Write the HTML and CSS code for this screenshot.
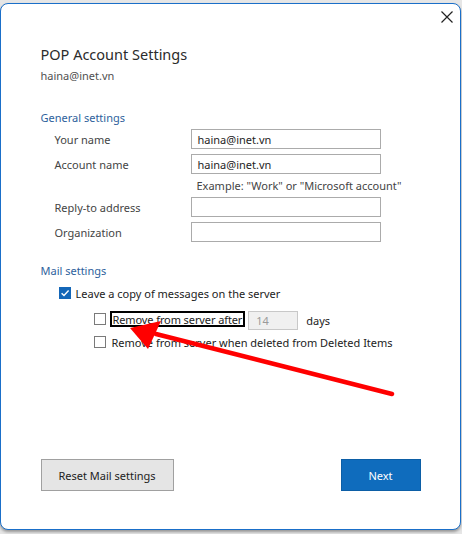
FILE: index.html
```html
<!DOCTYPE html>
<html>
<head>
<meta charset="utf-8">
<link rel="stylesheet" href="styles.css">
</head>
<body>
<div class="window">
  <div class="titlebar">
    <svg class="close" width="12" height="12" viewBox="0 0 12 12"><path d="M0.5 0.5 L11.5 11.5 M11.5 0.5 L0.5 11.5" stroke="#222" stroke-width="1.2" fill="none"/></svg>
  </div>
  <div class="content">
    <h1 class="title">POP Account Settings</h1>
    <div class="subtitle">haina@inet.vn</div>

    <div class="section-head general">General settings</div>
    <div class="form">
      <div class="label">Your name</div>
      <div class="input">haina@inet.vn</div>
      <div class="label">Account name</div>
      <div class="input">haina@inet.vn</div>
      <div></div>
      <div class="hint">Example: "Work" or "Microsoft account"</div>
      <div class="label">Reply-to address</div>
      <div class="input"></div>
      <div class="label">Organization</div>
      <div class="input"></div>
    </div>

    <div class="section-head mail">Mail settings</div>
    <div class="check-row row1">
      <span class="box checked"><svg width="12" height="12" viewBox="0 0 12 12"><path d="M2.6 6.2 L5 8.5 L9.6 3.6" stroke="#fff" stroke-width="1.4" fill="none"/></svg></span>
      <span class="ctext">Leave a copy of messages on the server</span>
    </div>
    <div class="check-row sub row2">
      <span class="box"></span>
      <span class="ctext focus">Remove from server after</span>
      <span class="days-input">14</span>
      <span class="days">days</span>
    </div>
    <div class="check-row sub row3">
      <span class="box"></span>
      <span class="ctext">Remove from server when deleted from Deleted Items</span>
    </div>

    <div class="buttons">
      <div class="btn reset">Reset Mail settings</div>
      <div class="btn next">Next</div>
    </div>
  </div>
  <svg class="arrow" width="462" height="534" viewBox="0 0 462 534">
    <line x1="156" y1="334" x2="392" y2="394" stroke="#ff0000" stroke-width="4.5" stroke-linecap="round"/>
    <polygon points="130,328 161,321 148,349" fill="#ff0000"/>
  </svg>
</div>
</body>
</html>
```
FILE: styles.css
```css
* { box-sizing: border-box; }
html, body { margin: 0; padding: 0; }
body {
  width: 462px;
  height: 534px;
  background: #e6e6e6;
  font-family: "Noto Sans", "Open Sans", sans-serif;
  font-size: 11px;
  color: #333;
  overflow: hidden;
}
.window {
  position: relative;
  margin-top: 3px;
  width: 461px;
  height: 527px;
  background: #fff;
  border: 1.5px solid #1a6fc9;
  border-radius: 8px;
  box-shadow: 0 2px 3px rgba(0,0,0,0.35);
}
.titlebar {
  height: 36px;
  display: flex;
  justify-content: flex-end;
  align-items: flex-start;
  padding-top: 6.5px;
  padding-right: 7.5px;
}
.close { display: block; }
.content {
  padding: 0 39.5px 0 39.5px;
}
.title {
  margin: 4px 0 0 0;
  font-size: 14.5px;
  font-weight: normal;
  line-height: 20px;
  color: #2b2b2b;
}
.subtitle {
  margin-top: 4px;
  line-height: 16px;
  color: #505050;
}
.section-head {
  line-height: 16px;
  color: #2e5f9c;
}
.general { margin-top: 26px; }
.mail { margin-top: 21px; }
.form {
  margin-top: 3px;
  display: grid;
  grid-template-columns: 150px 190px;
  grid-template-rows: 20px 25px 23px 20px 25px;
}
.form > :nth-child(3), .form > :nth-child(4) { margin-top: 5px; }
.form > :nth-child(9), .form > :nth-child(10) { margin-top: 5px; }
.label {
  padding-left: 14px;
  display: flex;
  align-items: center;
  color: #444;
}
.input {
  border: 1px solid #ababab;
  background: #fff;
  height: 20px;
  padding-left: 6px;
  display: flex;
  align-items: center;
  color: #1e1e1e;
}
.hint {
  display: flex;
  align-items: center;
  padding-left: 6px;
  color: #444;
  white-space: nowrap;
}
.check-row {
  display: flex;
  align-items: center;
  height: 20px;
}
.row1 { margin-top: 4px; padding-left: 18px; }
.row2 { margin-top: 6px; }
.row3 { margin-top: 3px; }
.sub { padding-left: 53px; }
.box {
  width: 12px;
  height: 12px;
  border: 1px solid #7a7a7a;
  background: #fff;
  flex: none;
  display: flex;
}
.box.checked {
  background: #1467b8;
  border-color: #1467b8;
}
.box.checked svg { margin: -1px; }
.ctext {
  margin-left: 6px;
  color: #222;
  white-space: nowrap;
}
.row1 .ctext { margin-left: 5px; }
.focus {
  margin-left: 4px;
  border: 2px solid #000;
  padding: 0 1px;
  height: 16px;
  display: flex;
  align-items: center;
  letter-spacing: -0.1px;
}
.days-input {
  margin-left: 3px;
  width: 50px;
  height: 19px;
  border: 1px solid #c8c8c8;
  background: #f0f0f0;
  color: #9a9a9a;
  padding-left: 7px;
  display: flex;
  align-items: center;
  margin-top: 2px;
}
.days {
  margin-left: 8px;
  margin-top: 3px;
  color: #222;
}
.buttons {
  margin-top: 107px;
  display: flex;
  justify-content: space-between;
}
.btn {
  height: 32px;
  display: flex;
  align-items: center;
  justify-content: center;
}
.reset {
  width: 133px;
  background: #e5e5e5;
  border: 1px solid #a0a0a0;
  color: #222;
}
.next {
  width: 80px;
  background: #0f6cbd;
  border: 1px solid #0c5ea6;
  color: #fff;
}
.arrow {
  position: absolute;
  left: -1.5px;
  top: -4.5px;
  pointer-events: none;
}
```
